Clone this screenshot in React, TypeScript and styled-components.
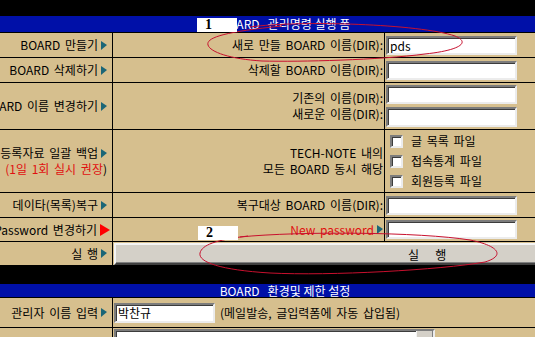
import styled, {createGlobalStyle} from "styled-components";

const TAN = "#D6BF8E";
const BLUE = "#0010A8";
const TEAL = "#1B6677";
const RED = "#E01010";

const GlobalStyle = createGlobalStyle`
  html, body {
    margin: 0;
    padding: 0;
    background: #000;
    overflow: hidden;
  }
  body {
    font-family: "Noto Sans CJK KR", "Noto Sans", sans-serif;
    font-size: 12px;
    word-spacing: 2px;
    color: #000;
  }
`;

const Page = styled.div`
  position: relative;
  width: 570px;
  padding-top: 16px;
  background: #000;
`;

const TitleBar = styled.div<{$h: number}>`
  height: ${({$h}) => $h}px;
  background: ${BLUE};
  color: #fff;
  display: flex;
  align-items: center;
  justify-content: center;
  line-height: 1;
  white-space: pre;
  word-spacing: 0;
`;

const Grid = styled.div<{$rows: string; $cols: string}>`
  display: grid;
  grid-template-columns: ${({$cols}) => $cols};
  grid-template-rows: ${({$rows}) => $rows};
  gap: 1px;
  padding-top: 1px;
  background: #000;
`;

const Spacer = styled.div<{$h: number}>`
  height: ${({$h}) => $h}px;
`;

const Cell = styled.div<{$span?: number}>`
  background: ${TAN};
  overflow: hidden;
  white-space: nowrap;
  line-height: 16px;
  grid-column: ${({$span}) => ($span ? `span ${$span}` : "auto")};
`;

const LabelCell = styled(Cell)`
  display: flex;
  flex-direction: column;
  justify-content: center;
  align-items: flex-end;
  padding-right: 5px;
`;

const CaptionCell = styled(Cell)`
  display: flex;
  flex-direction: column;
  justify-content: center;
  align-items: flex-end;
  padding-right: 1px;
`;

const FieldCell = styled(Cell)<{$gap?: number}>`
  display: flex;
  flex-direction: column;
  justify-content: center;
  align-items: flex-start;
  gap: ${({$gap}) => $gap ?? 0}px;
  padding-left: 1px;
`;

const InlineCell = styled(Cell)`
  display: flex;
  align-items: center;
  gap: 5px;
  padding-left: 1px;
`;

const Line = styled.span<{$red?: boolean}>`
  display: flex;
  align-items: center;
  color: ${({$red}) => ($red ? RED : "inherit")};
`;

const Dark = styled.span`
  color: #000;
`;

const Arrow = styled.span<{$red?: boolean}>`
  display: inline-block;
  width: 0;
  height: 0;
  margin-left: 3px;
  margin-right: ${({$red}) => ($red ? "-3px" : "0")};
  border-left: ${({$red}) => ($red ? `10px solid #ff0000` : `6px solid ${TEAL}`)};
  border-top: ${({$red}) => ($red ? 6 : 4)}px solid transparent;
  border-bottom: ${({$red}) => ($red ? 6 : 5)}px solid transparent;
`;

const TextInput = styled.input<{$w: number; $h?: number}>`
  box-sizing: border-box;
  width: ${({$w}) => $w}px;
  height: ${({$h}) => $h ?? 19}px;
  margin: 0;
  padding: 0 2px;
  background: #fff;
  border: 2px solid;
  border-color: #7c7c7c #ececec #ececec #7c7c7c;
  box-shadow: inset 1px 1px 0 #3c3c3c;
  font-family: "Noto Sans CJK KR", "Noto Sans", sans-serif;
  font-size: 12px;
  color: #000;
  outline: none;
`;

const CheckList = styled(Cell)`
  display: flex;
  flex-direction: column;
  justify-content: center;
  padding-left: 5px;
`;

const CheckRow = styled.label`
  display: flex;
  align-items: center;
  gap: 8px;
  height: 20px;
`;

const CheckBox = styled.span`
  box-sizing: border-box;
  width: 13px;
  height: 13px;
  background: #fff;
  border: 2px solid;
  border-color: #7c7c7c #ececec #ececec #7c7c7c;
  box-shadow: inset 1px 1px 0 #3c3c3c;
`;

const RunCell = styled(Cell)`
  display: flex;
  align-items: flex-end;
  padding-left: 1px;
`;

const RunButton = styled.button`
  box-sizing: border-box;
  width: 100%;
  height: 22px;
  margin: 0;
  padding: 0 0 0 292px;
  text-align: left;
  white-space: pre;
  word-spacing: 0;
  background: #D4D0C8;
  border: 2px solid;
  border-color: #f4f4f4 #404040 #404040 #f4f4f4;
  box-shadow: inset -1px -1px 0 #808080;
  font-family: "Noto Sans CJK KR", "Noto Sans", sans-serif;
  font-size: 12px;
  color: #000;
`;

const Note = styled.span`
  color: #000;
`;

const MemoBox = styled.div`
  box-sizing: border-box;
  display: flex;
  justify-content: flex-end;
  width: 321px;
  height: 30px;
  margin-top: 1px;
  background: #fff;
  border: 2px solid;
  border-color: #7c7c7c #ececec #ececec #7c7c7c;
  box-shadow: inset 1px 1px 0 #3c3c3c;
`;

const ScrollTrack = styled.div`
  width: 16px;
  background: #D4D0C8;
  border-left: 1px solid #f4f4f4;
  box-shadow: inset -1px 0 0 #808080;
`;

const TopCell = styled(Cell)`
  padding-left: 1px;
`;

const Overlay = styled.svg`
  position: absolute;
  left: 0;
  top: 0;
  pointer-events: none;
`;

const Badge = styled.div<{$x: number; $y: number}>`
  position: absolute;
  left: ${({$x}) => $x}px;
  top: ${({$y}) => $y}px;
  width: 40px;
  height: 14px;
  padding-left: 8px;
  box-sizing: border-box;
  background: #fff;
  color: #000;
  font-family: "Liberation Serif", serif;
  font-weight: bold;
  font-size: 14px;
  line-height: 14px;
`;

export default function App() {
  return (
    <>
      <GlobalStyle />
      <Page>
        <TitleBar $h={16}>{"BOARD   관리명령 실행 폼"}</TitleBar>
        <Grid $cols="112px 271px 185px" $rows="24px 24px 46px 62px 24px 23px 23px">
          <LabelCell><Line>BOARD 만들기<Arrow /></Line></LabelCell>
          <CaptionCell>새로 만들 BOARD 이름(DIR):</CaptionCell>
          <FieldCell><TextInput $w={131} defaultValue="pds" /></FieldCell>

          <LabelCell><Line>BOARD 삭제하기<Arrow /></Line></LabelCell>
          <CaptionCell>삭제할 BOARD 이름(DIR):</CaptionCell>
          <FieldCell><TextInput $w={131} /></FieldCell>

          <LabelCell><Line>BOARD 이름 변경하기<Arrow /></Line></LabelCell>
          <CaptionCell>
            <span>기존의 이름(DIR):</span>
            <span>새로운 이름(DIR):</span>
          </CaptionCell>
          <FieldCell $gap={3}>
            <TextInput $w={131} />
            <TextInput $w={131} $h={20} />
          </FieldCell>

          <LabelCell>
            <Line>회원등록자료 일괄 백업<Arrow /></Line>
            <Line $red>(1일 1회 실시 권장<Dark>)</Dark></Line>
          </LabelCell>
          <CaptionCell>
            <span>TECH-NOTE 내의</span>
            <span>모든 BOARD 동시 해당</span>
          </CaptionCell>
          <CheckList>
            <CheckRow><CheckBox />글 목록 파일</CheckRow>
            <CheckRow><CheckBox />접속통계 파일</CheckRow>
            <CheckRow><CheckBox />회원등록 파일</CheckRow>
          </CheckList>

          <LabelCell><Line>데이타(목록)복구<Arrow /></Line></LabelCell>
          <CaptionCell>복구대상 BOARD 이름(DIR):</CaptionCell>
          <FieldCell><TextInput $w={131} /></FieldCell>

          <LabelCell><Line>Password 변경하기<Arrow $red /></Line></LabelCell>
          <CaptionCell><Line $red>New password<Arrow /></Line></CaptionCell>
          <FieldCell><TextInput $w={131} type="text" /></FieldCell>

          <LabelCell><Line>실 행<Arrow /></Line></LabelCell>
          <RunCell $span={2}><RunButton type="button">{"실      행"}</RunButton></RunCell>
        </Grid>

        <Spacer $h={19} />
        <TitleBar $h={13}>{"BOARD   환경및 제한 설정"}</TitleBar>
        <Grid $cols="112px 457px" $rows="29px 30px">
          <LabelCell><Line>관리자 이름 입력<Arrow /></Line></LabelCell>
          <InlineCell>
            <TextInput $w={101} $h={20} defaultValue="박찬규" />
            <Note>(메일발송, 글입력폼에 자동 삽입됨)</Note>
          </InlineCell>
          <Cell />
          <TopCell>
            <MemoBox><ScrollTrack /></MemoBox>
          </TopCell>
        </Grid>

        <Overlay width={570} height={337} viewBox="0 0 570 337">
          <path
            d="M250 27 C300 20, 420 24, 455 36 C470 42, 462 50, 425 54 C380 60, 300 62, 262 61 C230 59, 210 52, 208 45 C206 38, 222 32, 282 26"
            fill="none"
            stroke="#C8102E"
            strokeWidth={1}
          />
          <path
            d="M240 237 C300 231, 420 232, 470 240 C500 246, 505 256, 485 262 C440 270, 330 276, 270 273 C220 270, 198 262, 200 253 C202 245, 215 240, 248 236"
            fill="none"
            stroke="#C8102E"
            strokeWidth={1}
          />
        </Overlay>
        <Badge $x={197} $y={18}>1</Badge>
        <Badge $x={198} $y={226}>2</Badge>
      </Page>
    </>
  );
}
